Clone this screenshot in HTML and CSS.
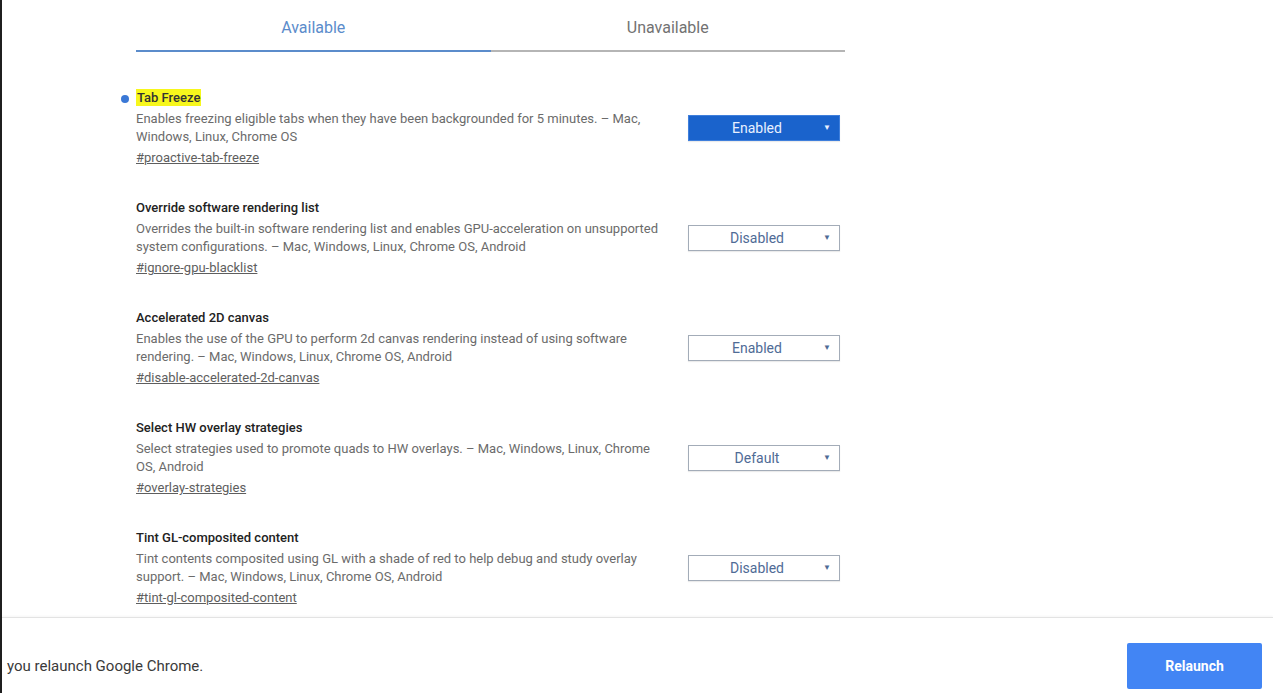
FILE: index.html
```html
<!DOCTYPE html>
<html lang="en">
<head>
  <meta charset="UTF-8" />
  <title>Experiments</title>
  <link rel="stylesheet" href="styles.css">
</head>
<body>
  <div class="page">
    <main class="content">
      <nav class="tabs">
        <a class="tab active" href="#available">Available</a>
        <a class="tab" href="#unavailable">Unavailable</a>
      </nav>

      <section class="experiments" id="available">
        <div class="experiment">
          <div class="info">
            <h3 class="title"><span class="dot"></span><mark>Tab Freeze</mark></h3>
            <p class="desc">Enables freezing eligible tabs when they have been backgrounded for 5 minutes. – Mac, Windows, Linux, Chrome OS</p>
            <a class="perma" href="#proactive-tab-freeze">#proactive-tab-freeze</a>
          </div>
          <div class="select on">Enabled<span class="arrow">▼</span></div>
        </div>

        <div class="experiment">
          <div class="info">
            <h3 class="title">Override software rendering list</h3>
            <p class="desc">Overrides the built-in software rendering list and enables GPU-acceleration on unsupported system configurations. – Mac, Windows, Linux, Chrome OS, Android</p>
            <a class="perma" href="#ignore-gpu-blacklist">#ignore-gpu-blacklist</a>
          </div>
          <div class="select">Disabled<span class="arrow">▼</span></div>
        </div>

        <div class="experiment">
          <div class="info">
            <h3 class="title">Accelerated 2D canvas</h3>
            <p class="desc">Enables the use of the GPU to perform 2d canvas rendering instead of using software rendering. – Mac, Windows, Linux, Chrome OS, Android</p>
            <a class="perma" href="#disable-accelerated-2d-canvas">#disable-accelerated-2d-canvas</a>
          </div>
          <div class="select">Enabled<span class="arrow">▼</span></div>
        </div>

        <div class="experiment">
          <div class="info">
            <h3 class="title">Select HW overlay strategies</h3>
            <p class="desc">Select strategies used to promote quads to HW overlays. – Mac, Windows, Linux, Chrome OS, Android</p>
            <a class="perma" href="#overlay-strategies">#overlay-strategies</a>
          </div>
          <div class="select">Default<span class="arrow">▼</span></div>
        </div>

        <div class="experiment">
          <div class="info">
            <h3 class="title">Tint GL-composited content</h3>
            <p class="desc">Tint contents composited using GL with a shade of red to help debug and study overlay support. – Mac, Windows, Linux, Chrome OS, Android</p>
            <a class="perma" href="#tint-gl-composited-content">#tint-gl-composited-content</a>
          </div>
          <div class="select">Disabled<span class="arrow">▼</span></div>
        </div>
      </section>
    </main>

    <footer class="relaunch-bar">
      <p class="notice">you relaunch Google Chrome.</p>
      <button class="relaunch">Relaunch</button>
    </footer>
  </div>
</body>
</html>
```

FILE: styles.css
```css
:root {
  --blue: #1a63cc;
  --blue-light: #4285f4;
  --tab-blue: #5b8ccb;
  --text: #333;
  --muted: #6b6b6b;
  --line: #b5b5b5;
}

* {
  margin: 0;
  padding: 0;
  box-sizing: border-box;
}

html, body {
  height: 100%;
}

body {
  font-family: Roboto, "Liberation Sans", Arial, sans-serif;
  background-color: #fff;
  color: var(--text);
  overflow: hidden;
}

.page {
  height: 100vh;
  display: flex;
  flex-direction: column;
  border-left: 2px solid #1f1f1f;
}

.content {
  flex: 1;
  overflow: hidden;
  padding-left: 134px;
}

/* Tabs */
.tabs {
  display: flex;
  width: 709px;
  height: 52px;
}

.tab {
  flex: 1;
  text-align: center;
  padding-top: 18px;
  font-size: 16px;
  color: #727272;
  text-decoration: none;
  border-bottom: 2px solid var(--line);
}

.tab.active {
  color: var(--tab-blue);
  border-bottom-color: var(--tab-blue);
}

/* Experiment rows */
.experiments {
  padding-top: 37px;
  width: 709px;
}

.experiment {
  display: flex;
  align-items: center;
  margin-bottom: 32px;
}

.info {
  width: 530px;
  font-size: 13px;
  line-height: 18px;
}

.title {
  position: relative;
  font-size: 13px;
  font-weight: 500;
  color: #222;
  line-height: 18px;
}

.title mark {
  background-color: #f7f71c;
  color: #333;
  padding: 1px 1px;
}

.dot {
  position: absolute;
  left: -15px;
  top: 6px;
  width: 8px;
  height: 8px;
  border-radius: 50%;
  background-color: #3a78d6;
}

.desc {
  margin-top: 3px;
  color: var(--muted);
}

.perma {
  display: inline-block;
  margin-top: 3px;
  color: #5e5e5e;
  text-decoration: underline;
}

.select {
  position: relative;
  margin-left: 22px;
  width: 152px;
  height: 26px;
  line-height: 24px;
  padding-right: 14px;
  text-align: center;
  font-size: 14px;
  color: #4f6b96;
  background-color: #fff;
  border: 1px solid #a3acb8;
  box-shadow: 0 1px 1px rgba(0, 0, 0, 0.08);
}

.select.on {
  background-color: var(--blue);
  border-color: #3f7fdc;
  color: #e8f0ff;
}

.arrow {
  position: absolute;
  right: 8px;
  top: 0;
  font-size: 8px;
  color: inherit;
}

/* Bottom bar */
.relaunch-bar {
  height: 76px;
  display: flex;
  align-items: center;
  justify-content: space-between;
  padding: 25px 11px 4px 5px;
  border-top: 1px solid #e3e3e3;
  box-shadow: 0 -1px 2px rgba(0, 0, 0, 0.04);
}

.notice {
  font-size: 15px;
  color: #3a3a3a;
}

.relaunch {
  width: 135px;
  height: 46px;
  border: none;
  border-radius: 2px;
  background-color: var(--blue-light);
  color: #fff;
  font-family: inherit;
  font-size: 14px;
  font-weight: bold;
}
```
